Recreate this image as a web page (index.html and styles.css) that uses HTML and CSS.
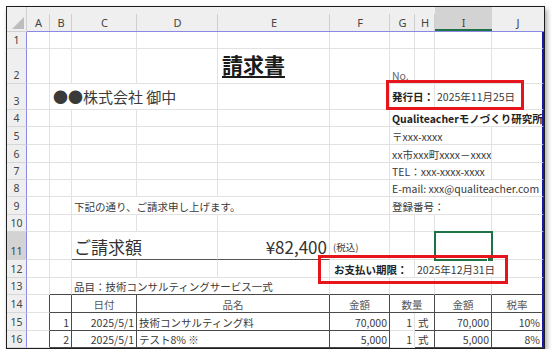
FILE: index.html
```html
<!DOCTYPE html>
<html lang="ja">
<head>
<meta charset="utf-8">
<title>請求書</title>
<link rel="stylesheet" href="styles.css">
</head>
<body>
<div class="window">
  <table class="sheet">
    <colgroup>
      <col class="w-rh"><col class="w-a"><col class="w-b"><col class="w-c"><col class="w-d"><col class="w-e"><col class="w-f"><col class="w-g"><col class="w-h"><col class="w-i"><col class="w-j">
    </colgroup>
    <tr class="r-hdr">
      <th class="corner"><span class="tri"></span></th>
      <th class="ch">A</th><th class="ch">B</th><th class="ch">C</th><th class="ch">D</th><th class="ch">E</th><th class="ch">F</th><th class="ch">G</th><th class="ch">H</th><th class="ch ch-sel">I</th><th class="ch ch-last">J</th>
    </tr>
    <tr class="h17">
      <th class="rh">1</th><td></td><td></td><td></td><td></td><td></td><td></td><td></td><td></td><td></td><td class="lastc"></td>
    </tr>
    <tr class="h35">
      <th class="rh">2</th><td></td><td></td><td></td><td></td><td class="title">請求書</td><td></td><td class="no">No.</td><td></td><td></td><td class="lastc"></td>
    </tr>
    <tr class="h26 mid">
      <th class="rh">3</th><td></td><td colspan="3" class="client">●●株式会社 御中</td><td></td><td></td><td colspan="2" class="b">発行日：</td><td colspan="2" class="lastc">2025年11月25日</td>
    </tr>
    <tr class="h17">
      <th class="rh">4</th><td></td><td></td><td></td><td></td><td></td><td></td><td colspan="4" class="b lastc">Qualiteacherモノづくり研究所</td>
    </tr>
    <tr class="h18">
      <th class="rh">5</th><td></td><td></td><td></td><td></td><td></td><td></td><td colspan="3">〒xxx-xxxx</td><td class="lastc"></td>
    </tr>
    <tr class="h18">
      <th class="rh">6</th><td></td><td></td><td></td><td></td><td></td><td></td><td colspan="3">xx市xxx町xxxx－xxxx</td><td class="lastc"></td>
    </tr>
    <tr class="h17">
      <th class="rh">7</th><td></td><td></td><td></td><td></td><td></td><td></td><td colspan="3">TEL：xxx-xxxx-xxxx</td><td class="lastc"></td>
    </tr>
    <tr class="h17">
      <th class="rh">8</th><td></td><td></td><td></td><td></td><td></td><td></td><td colspan="4" class="lastc">E-mail: xxx@qualiteacher.com</td>
    </tr>
    <tr class="h18">
      <th class="rh">9</th><td></td><td></td><td colspan="3">下記の通り、ご請求申し上げます。</td><td></td><td colspan="3">登録番号：</td><td class="lastc"></td>
    </tr>
    <tr class="h17">
      <th class="rh">10</th><td></td><td></td><td></td><td></td><td></td><td></td><td></td><td></td><td></td><td class="lastc"></td>
    </tr>
    <tr class="h28">
      <th class="rh rh-sel">11</th><td></td><td></td><td colspan="2" class="big under">ご請求額</td><td class="big num under">¥82,400</td><td class="tax">(税込)</td><td></td><td></td><td class="sel"></td><td class="lastc"></td>
    </tr>
    <tr class="h18">
      <th class="rh">12</th><td></td><td></td><td></td><td></td><td></td><td colspan="2" class="b pay">お支払い期限：</td><td colspan="3" class="lastc">2025年12月31日</td>
    </tr>
    <tr class="h17">
      <th class="rh">13</th><td></td><td class="tt"></td><td colspan="3" class="tt">品目：技術コンサルティングサービス一式</td><td class="tt"></td><td colspan="2" class="tt"></td><td class="tt"></td><td class="tt lastc"></td>
    </tr>
    <tr class="h18 thead">
      <th class="rh">14</th><td class="tl"></td><td class="tb"></td><td class="tb ctr">日付</td><td colspan="2" class="tb ctr">品名</td><td class="tb ctr">金額</td><td colspan="2" class="tb ctr">数量</td><td class="tb ctr">金額</td><td class="tb ctr lastc">税率</td>
    </tr>
    <tr class="h18">
      <th class="rh">15</th><td class="tl"></td><td class="tb num">1</td><td class="tb num">2025/5/1</td><td colspan="2" class="tb">技術コンサルティング料</td><td class="tb num">70,000</td><td class="num">1</td><td class="tb unit">式</td><td class="tb num">70,000</td><td class="tb num lastc">10%</td>
    </tr>
    <tr class="h17">
      <th class="rh">16</th><td class="tl"></td><td class="tb num">2</td><td class="tb num">2025/5/1</td><td colspan="2" class="tb">テスト8% ※</td><td class="tb num">5,000</td><td class="num">1</td><td class="tb unit">式</td><td class="tb num">5,000</td><td class="tb num lastc">8%</td>
    </tr>
  </table>
  <div class="mark mark-issue"></div>
  <div class="mark mark-due"></div>
</div>
</body>
</html>
```

FILE: styles.css
```css
* { box-sizing: border-box; }
html, body { margin: 0; background: #fff; }
body { padding: 6px 0 0 6px; font-family: "Noto Sans CJK JP", "Noto Sans", sans-serif; color: #3a3a3a; }

.window {
  position: relative;
  width: 539px;
  height: 343px;
  border: 1px solid #1e1e1e;
  overflow: hidden;
  background: #fff;
  box-shadow: 2px 3px 5px rgba(0, 0, 0, 0.35);
}

.sheet {
  border-collapse: separate;
  border-spacing: 0;
  table-layout: fixed;
  width: 537px;
  font-size: 10.5px;
}

.w-rh { width: 20px; }
.w-a { width: 23px; }
.w-b { width: 22px; }
.w-c { width: 65px; }
.w-d { width: 81px; }
.w-e { width: 112px; }
.w-f { width: 60px; }
.w-g { width: 25px; }
.w-h { width: 20px; }
.w-i { width: 57px; }
.w-j { width: 52px; }

.sheet td, .sheet th {
  padding: 0 2px;
  border-right: 1px solid #e2e2e2;
  border-bottom: 1px solid #e2e2e2;
  white-space: nowrap;
  overflow: hidden;
  vertical-align: bottom;
  font-weight: normal;
  text-align: left;
  line-height: 14px;
}

.r-hdr { height: 25px; }
.h17 { height: 17px; }
.h18 { height: 18px; }
.h26 { height: 26px; }
.h28 { height: 28px; }
.h35 { height: 35px; }

.sheet .mid td { vertical-align: middle; }

/* column headers */
.sheet th.ch {
  background: linear-gradient(#cfcfcf, #cfcfcf) right bottom / 1px 17px no-repeat, #efefef;
  border-right: 0;
  border-bottom: 1px solid #8a8ae6;
  text-align: center;
  font-family: "Noto Sans", sans-serif;
  font-size: 11px;
  color: #444;
  line-height: 16px;
  padding: 0;
}
.sheet th.ch-sel {
  background: linear-gradient(#1f7244, #1f7244) left bottom / 100% 2px no-repeat, #d3d3d3;
}
.sheet th.ch-last { background: #efefef; border-bottom-color: #8a8ae6; }

.sheet th.corner {
  position: relative;
  background: #efefef;
  border-right: 1px solid #cfcfcf;
  border-bottom: 1px solid #cfcfcf;
  padding: 0;
}
.tri {
  position: absolute;
  right: 2px;
  bottom: 2px;
  width: 0;
  height: 0;
  border-left: 12px solid transparent;
  border-bottom: 12px solid #bdbdbd;
}

/* row headers */
.sheet th.rh {
  background: #efefef;
  border-right: 1px solid #8a8ae6;
  border-bottom: 1px solid #d6d6d6;
  text-align: center;
  font-family: "Noto Sans", sans-serif;
  font-size: 10.5px;
  color: #444;
  padding: 0;
  line-height: 15px;
  vertical-align: bottom;
}
.sheet th.rh-sel { background: #d3d3d3; }

.sheet td.lastc { border-right: 2px solid #1a1aa8; }

.b { font-weight: bold; color: #222; }
.sheet td.b { font-weight: bold; color: #222; }

.sheet td.title {
  font-size: 21px;
  font-weight: bold;
  color: #1a1a1a;
  text-decoration: underline;
  text-underline-offset: 3px;
  text-decoration-thickness: 2px;
  line-height: 24px;
  padding: 0 0 7px 4px;
  overflow: visible;
}
.no { color: #666; }
.sheet td.client { font-size: 15px; line-height: 22px; padding-left: 3px; }

.sheet td.big { font-size: 17px; line-height: 24px; color: #333; }
.sheet td.under { border-bottom: 1px solid #555; }
.sheet td.tax { font-size: 9.5px; line-height: 24px; padding-left: 3px; }
.sheet td.sel { position: relative; outline: 2px solid #1f7244; outline-offset: -1px; overflow: visible; }
.sheet td.sel::after {
  content: "";
  position: absolute;
  right: -3px;
  bottom: -3px;
  width: 5px;
  height: 5px;
  background: #1f7244;
  border: 1px solid #fff;
}
.sheet td.pay { padding-left: 4px; }

.sheet td.num { text-align: right; }
.sheet td.ctr { text-align: center; }
.sheet td.unit { padding-left: 3px; }

/* item table lines */
.sheet td.tt { border-bottom: 1px solid #4a4a4a; }
.sheet td.tl { border-right: 1px solid #4a4a4a; }
.sheet td.tb { border-right: 1px solid #4a4a4a; border-bottom: 1px solid #4a4a4a; }
.sheet td.tb.lastc { border-right: 2px solid #1a1aa8; }
.thead td { color: #555; }

/* annotation boxes */
.mark {
  position: absolute;
  border: 3px solid #e8141b;
}
.mark-issue { left: 379px; top: 73px; width: 138px; height: 30px; }
.mark-due { left: 311px; top: 248px; width: 190px; height: 29px; }
```
